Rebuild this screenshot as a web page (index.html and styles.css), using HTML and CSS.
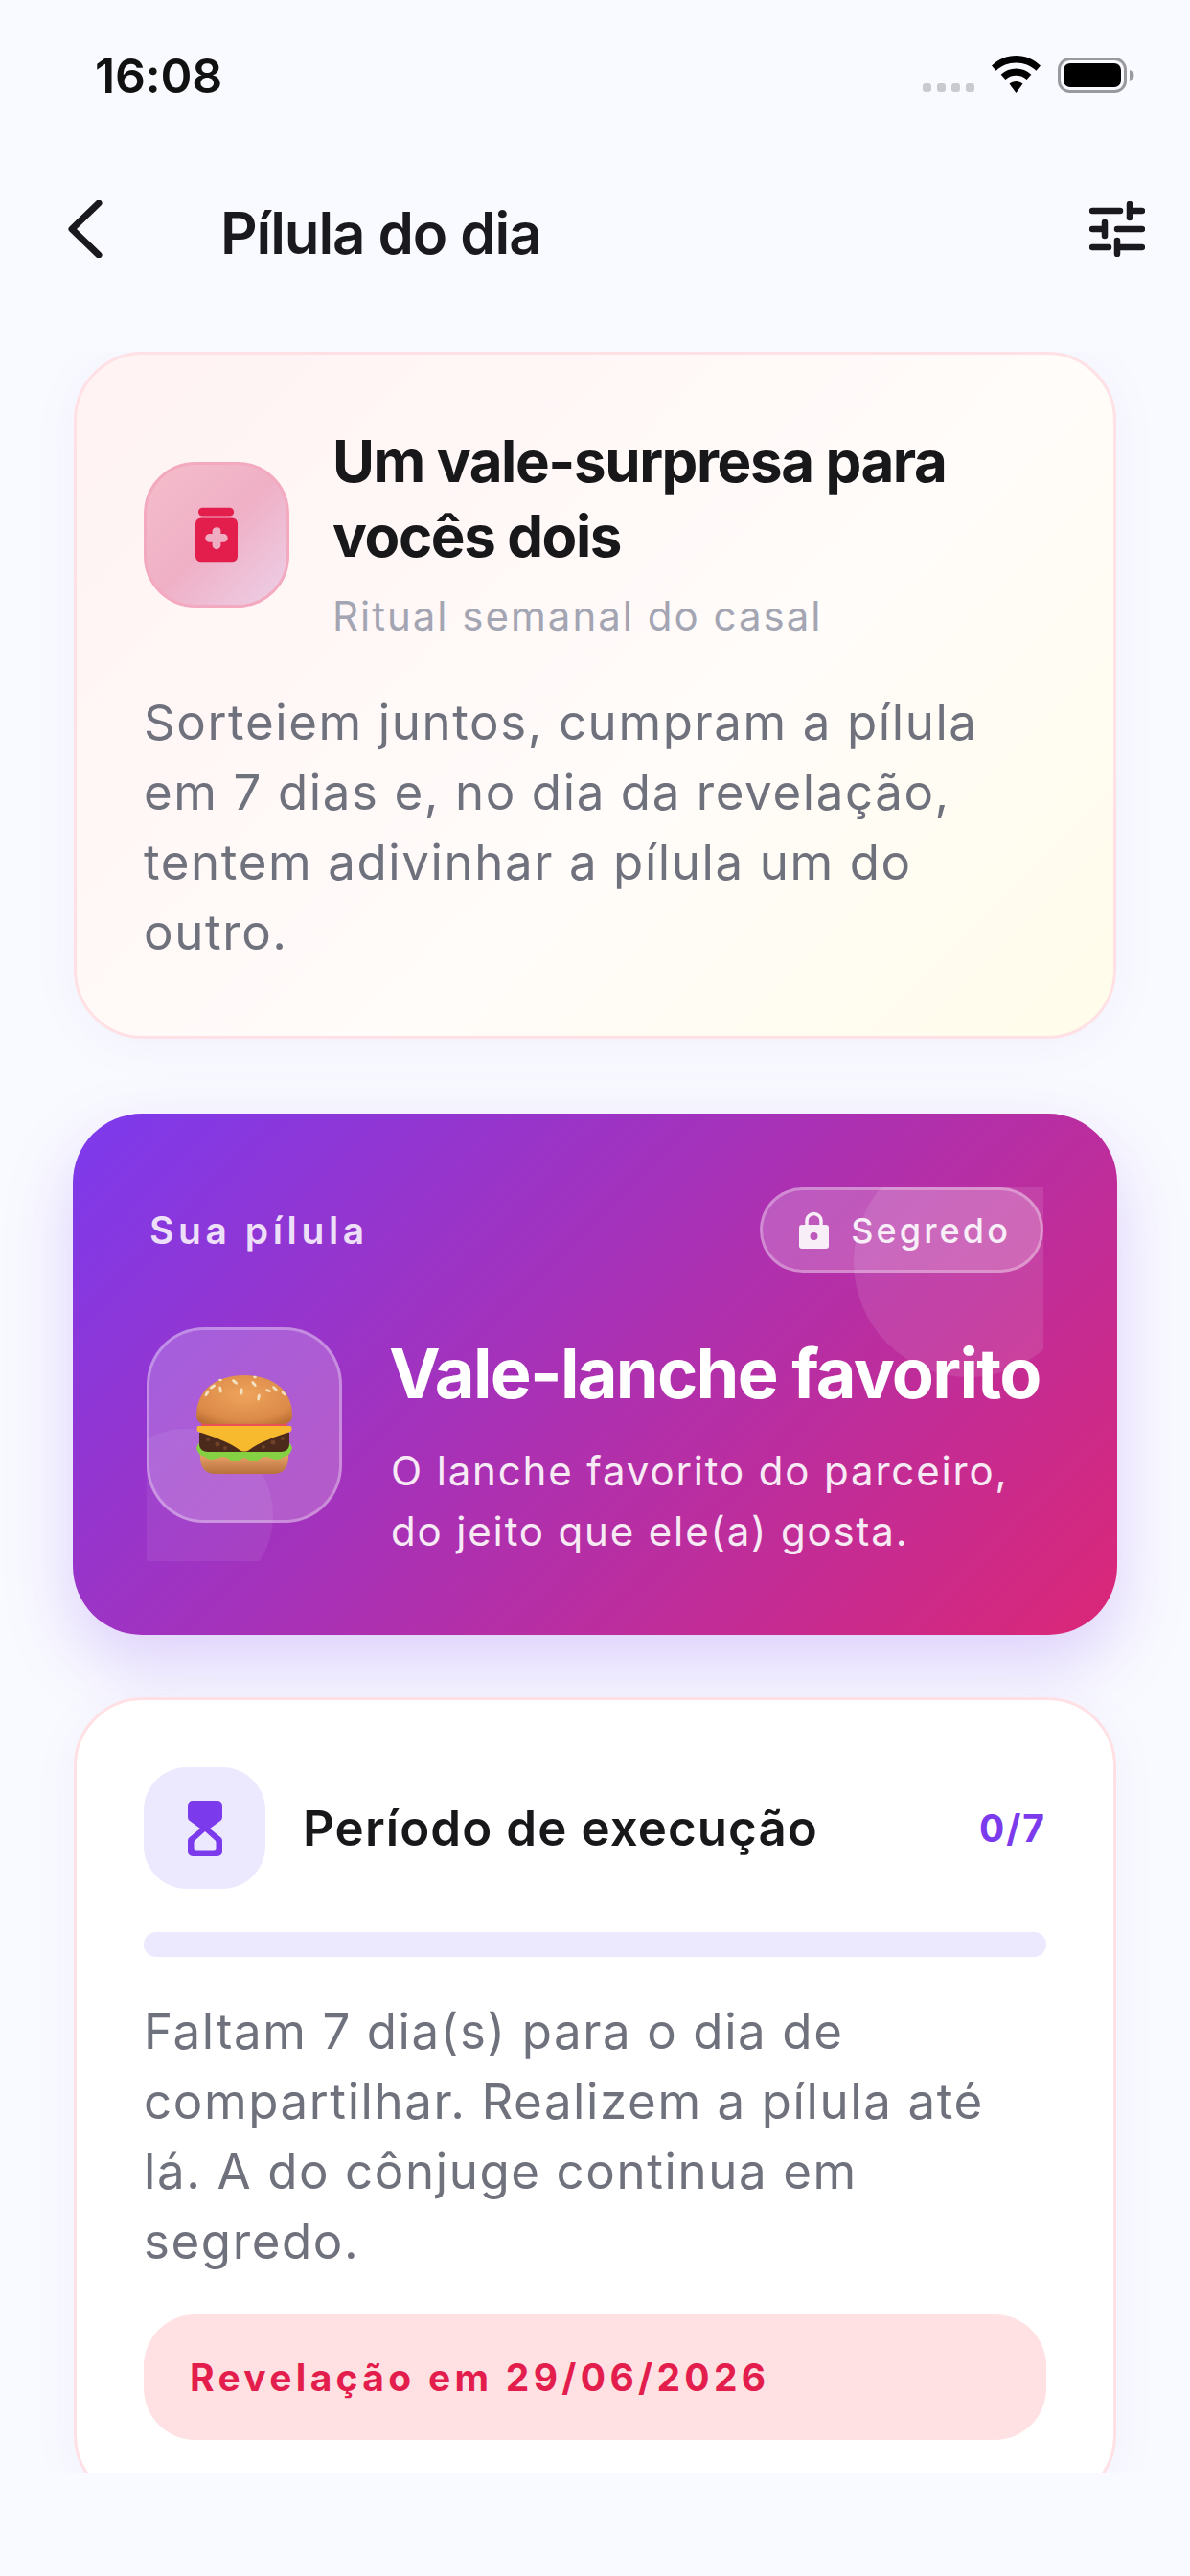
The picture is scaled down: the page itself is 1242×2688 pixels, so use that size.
FILE: index.html
```html
<!DOCTYPE html>
<html lang="pt">
<head>
<meta charset="utf-8">
<title>Pílula do dia</title>
<link rel="stylesheet" href="styles.css">
</head>
<body>
<div class="screen">
  <div class="status-bar">
    <span class="time">16:08</span>
    <div class="status-icons">
      <div class="signal"><i></i><i></i><i></i><i></i></div>
      <svg class="wifi" viewBox="0 0 51 39"><path d="M25.5 0C15.5 0 7 3.8 0 10.6l4.6 5.2C10.400 10.300 17.500 7.500 25.500 7.500S40.600 10.300 46.400 15.800L51 10.600C44 3.800 35.500 0 25.500 0Z"/><path d="M25.500 13.500C19.500 13.500 14.200 15.700 9.700 19.700L14.400 25C17.400 22.300 21.200 20.800 25.500 20.800S33.600 22.300 36.600 25L41.300 19.700C36.800 15.700 31.500 13.500 25.500 13.500Z"/><path d="M25.500 27C22.900 27 20.500 27.900 18.500 29.600L25.500 39L32.500 29.600C30.500 27.900 28.100 27 25.500 27Z"/></svg>
      <svg class="battery" viewBox="0 0 80 37"><rect x="1.500" y="1.500" width="69" height="34" rx="11" fill="none" stroke="#9a9a9e" stroke-width="3"/><rect x="6" y="6" width="60" height="25" rx="7" fill="#000"/><path d="M75 13c3 1 4.500 3 4.500 5.500S78 23 75 24Z" fill="#9a9a9e"/></svg>
    </div>
  </div>

  <header class="top-nav">
    <svg class="back" viewBox="0 0 36 60"><path d="M32 3 4 30l28 27" fill="none" stroke="#1a1a1e" stroke-width="7" stroke-linecap="round" stroke-linejoin="round"/></svg>
    <h1 class="nav-title">Pílula do dia</h1>
    <svg class="tune" viewBox="0 0 58 58"><g fill="none" stroke="#1a1a1e" stroke-width="6.500" stroke-linecap="round"><path d="M3 10h29M42 10h13M42 3v14"/><path d="M3 29h12M16 22v14M29 29h26"/><path d="M3 48h17M29 48h26M29 41v14"/></g></svg>
  </header>

  <main class="content">
    <section class="card intro">
      <div class="intro-head">
        <div class="jar-tile">
          <svg class="jar" viewBox="0 0 46 58"><rect x="3" y="0" width="38" height="9" rx="4.500" fill="#e31e4d"/><rect x="0" y="11" width="45" height="47" rx="6" fill="#e31e4d"/><path d="M23 21a4 4 0 0 1 4 4v3h3a4.500 4.500 0 0 1 0 9h-3v3a4.500 4.500 0 0 1-9 0v-3h-3a4.500 4.500 0 0 1 0-9h3v-3a4.500 4.500 0 0 1 5-4Z" fill="#f0adc2"/></svg>
        </div>
        <div class="intro-titles">
          <h2 class="intro-title">Um vale-surpresa para vocês dois</h2>
          <p class="intro-sub">Ritual semanal do casal</p>
        </div>
      </div>
      <p class="body-text intro-text">Sorteiem juntos, cumpram a pílula em 7 dias e, no dia da revelação, tentem adivinhar a pílula um do outro.</p>
    </section>

    <section class="pill-card">
      <div class="pill-inner">
        <span class="blob blob-a"></span>
        <span class="blob blob-b"></span>
        <div class="pill-top">
          <span class="pill-label">Sua pílula</span>
          <span class="secret">
            <svg class="lock" viewBox="0 0 31 39"><path d="M8 17V10a7.500 7.500 0 0 1 15 0v7" fill="none" stroke="#f8eef8" stroke-width="3.500"/><path fill-rule="evenodd" d="M3 14h25a3 3 0 0 1 3 3v19a3 3 0 0 1-3 3H3a3 3 0 0 1-3-3V17a3 3 0 0 1 3-3Zm12.500 8a4 4 0 1 0 0 8 4 4 0 0 0 0-8Z" fill="#f8eef8"/></svg>
            Segredo
          </span>
        </div>
        <div class="pill-main">
          <div class="emoji-tile">
            <svg class="burger" viewBox="0 0 100 104" role="img" aria-label="hambúrguer">
              <defs>
                <radialGradient id="bun" cx=".5" cy=".4" r=".7"><stop offset="0" stop-color="#eea45c"/><stop offset=".75" stop-color="#dc8a48"/><stop offset="1" stop-color="#bd7034"/></radialGradient>
                <linearGradient id="bottom" x1="0" y1="0" x2="0" y2="1"><stop offset="0" stop-color="#eea86e"/><stop offset="1" stop-color="#b9713c"/></linearGradient>
              </defs>
              <path d="M4 80H96C97 92 94 103 80 103H20C6 103 3 92 4 80Z" fill="url(#bottom)"/>
              <path d="M0 76C1 72 3 70 6 70H94C97 70 99 72 100 76 99 80 97 83 94 84 90 85 88 88 84 88 79 88 77 85 72 85 67 85 65 90 60 90 55 90 53 86 50 86 47 86 45 90 40 90 35 90 33 85 28 85 23 85 21 88 16 88 12 88 10 85 6 84 3 83 1 80 0 76Z" fill="#86d043"/>
              <path d="M3 60H97V72C97 77 93 80 88 80H12C7 80 3 77 3 72Z" fill="#4b2a1c"/>
              <g fill="#6e4128"><circle cx="12" cy="67" r="2"/><circle cx="22" cy="72" r="2.500"/><circle cx="80" cy="70" r="2.500"/><circle cx="90" cy="66" r="2"/><circle cx="70" cy="75" r="2"/><circle cx="30" cy="76" r="2"/></g>
              <rect x="5" y="48" width="90" height="9" rx="4.500" fill="#ea4f55"/>
              <path d="M2 53H98C100 53 100 58 98 59 82 64 66 70 55 78 52 80 48 80 45 78 34 70 18 64 2 59 0 58 0 53 2 53Z" fill="#f7b92e"/>
              <path d="M0 42C0 16 20 0 50 0S100 16 100 42C100 48 96 51 90 51H10C4 51 0 48 0 42Z" fill="url(#bun)"/>
              <g fill="#f3e2c0"><ellipse cx="17" cy="12" rx="3.500" ry="1.500" transform="rotate(-35 17 12)"/><ellipse cx="25" cy="5" rx="1.800" ry="1.200"/><ellipse cx="40" cy="7" rx="3.500" ry="1.500" transform="rotate(40 40 7)"/><ellipse cx="60" cy="9" rx="3.500" ry="1.500" transform="rotate(50 60 9)"/><ellipse cx="61" cy="2" rx="1.800" ry="1.200"/><ellipse cx="82" cy="14" rx="3.500" ry="1.500" transform="rotate(45 82 14)"/><ellipse cx="11" cy="19" rx="3.500" ry="1.500" transform="rotate(-60 11 19)"/><ellipse cx="25" cy="15" rx="3.500" ry="1.500" transform="rotate(80 25 15)"/><ellipse cx="47" cy="17" rx="3.500" ry="1.500" transform="rotate(95 47 17)"/><ellipse cx="65" cy="23" rx="3.500" ry="1.500" transform="rotate(100 65 23)"/><ellipse cx="75" cy="16" rx="3" ry="1.300" transform="rotate(25 75 16)"/><ellipse cx="91" cy="19" rx="3" ry="1.300" transform="rotate(45 91 19)"/></g>
            </svg>
          </div>
          <div class="pill-copy">
            <h2 class="pill-title">Vale-lanche favorito</h2>
            <p class="pill-desc">O lanche favorito do parceiro, do jeito que ele(a) gosta.</p>
          </div>
        </div>
      </div>
    </section>

    <section class="card period">
      <div class="period-head">
        <div class="glass-tile">
          <svg class="glass" viewBox="0 0 36 58"><path fill-rule="evenodd" d="M5 0h26a5 5 0 0 1 5 5v12c0 2-.8 3-2 4L23 29l11 9c1.300 1 2 2.300 2 4v11a5 5 0 0 1-5 5H5a5 5 0 0 1-5-5V42c0-1.700.7-3 2-4l11-9L2 21c-1.200-1-2-2-2-4V5a5 5 0 0 1 5-5Zm13 32-10 9c-1 .8-1.500 1.500-1.500 3v5c0 1.500 .5 2.500 2.500 2.500h18c2 0 2.500-1 2.500-2.500v-5c0-1.500-.5-2.200-1.500-3Z" fill="#7c3aed"/></svg>
        </div>
        <h3 class="period-title">Período de execução</h3>
        <span class="period-count">0/7</span>
      </div>
      <div class="track"></div>
      <p class="body-text period-text">Faltam 7 dia(s) para o dia de compartilhar. Realizem a pílula até lá. A do cônjuge continua em segredo.</p>
      <div class="reveal">Revelação em 29/06/2026</div>
    </section>
  </main>
  <div class="bottom-space"></div>
</div>
</body>
</html>
```

FILE: styles.css
```css
* { box-sizing: border-box; margin: 0; padding: 0; }
html, body { width: 1242px; height: 2688px; overflow: hidden; }
body { background: #f9faff; font-family: Inter, "Noto Sans", sans-serif; color: #1a1a1e; }

.screen { height: 2688px; display: flex; flex-direction: column; }

.status-bar { height: 150px; flex: none; display: flex; justify-content: space-between; padding: 50px 58px 0 99px; }
.time { font-size: 50px; line-height: 58px; font-weight: 600; letter-spacing: -.2px; color: #111; }
.status-icons { display: flex; align-items: flex-start; padding-top: 8px; }
.signal { display: flex; gap: 6px; margin-top: 29px; margin-right: 18px; }
.signal i { width: 9px; height: 9px; border-radius: 3px; background: #c9cacd; }
.wifi { width: 51px; height: 39px; margin-right: 18px; }
.battery { width: 80px; height: 37px; margin-top: 2px; }

.top-nav { height: 217px; flex: none; display: flex; align-items: flex-start; padding: 57px 47px 0 71px; }
.back { width: 36px; height: 60px; flex: none; margin-top: 2px; }
.nav-title { flex: 1; margin-left: 123px; font-size: 60px; line-height: 72px; font-weight: 600; letter-spacing: -1.100px; }
.tune { width: 58px; height: 58px; flex: none; margin-top: 3px; }

.content { flex: 1; min-height: 0; overflow: hidden; padding: 0 76px; display: flex; flex-direction: column; }

.card { flex: none; border: 3px solid #ffe1e5; border-radius: 72px; padding: 0 70px; box-shadow: 0 6px 48px rgba(120, 90, 220, .06); }

.intro { margin: 0 1px; padding-top: 72px; padding-bottom: 72px; background: linear-gradient(135deg, #fff2f3 0%, #fffcfa 58%, #fffcea 100%); }
.intro-head { display: flex; align-items: center; gap: 45px; }
.jar-tile { width: 152px; height: 152px; flex: none; display: flex; align-items: center; justify-content: center; border-radius: 54px; border: 3px solid #f3a9bf; background: linear-gradient(135deg, #f5bdcb 0%, #efb0c6 50%, #ecd0e7 100%); }
.jar { width: 45px; height: 58px; }
.intro-titles { flex: 1; padding-bottom: 3px; }
.intro-title { font-size: 60px; line-height: 78px; font-weight: 700; letter-spacing: -1.400px; color: #18181b; }
.intro-sub { margin-top: 18px; font-size: 42px; line-height: 54px; letter-spacing: 2px; color: #a3a5b3; }

.body-text { font-size: 51px; line-height: 73px; letter-spacing: 1.600px; color: #6f717c; }
.intro-text { margin-top: 44px; }

.pill-card { flex: none; height: 544px; margin-top: 78px; padding: 77px; border-radius: 72px; background: linear-gradient(135deg, #7c3aed 0%, #db2777 100%); box-shadow: 0 30px 72px rgba(124, 58, 237, .22); }
.pill-inner { position: relative; height: 390px; overflow: hidden; }
.blob { position: absolute; border-radius: 50%; background: rgba(255, 255, 255, .1); }
.blob-a { width: 240px; height: 240px; top: -42px; right: -42px; }
.blob-b { width: 180px; height: 180px; bottom: -42px; left: -48px; background: rgba(255, 255, 255, .07); }
.pill-top { position: relative; display: flex; justify-content: space-between; align-items: center; }
.pill-label { margin-left: 3px; font-size: 39px; font-weight: 600; letter-spacing: 4.600px; color: #eddff8; }
.secret { display: flex; align-items: center; gap: 23px; height: 89px; padding: 0 31px 0 38px; border: 3px solid rgba(255, 255, 255, .3); border-radius: 45px; background: rgba(255, 255, 255, .2); font-size: 36px; font-weight: 500; letter-spacing: 3.100px; color: #f8eef8; }
.lock { width: 31px; height: 39px; }
.pill-main { position: relative; display: flex; align-items: flex-start; gap: 49px; margin-top: 57px; }
.emoji-tile { width: 204px; height: 204px; flex: none; display: flex; align-items: center; justify-content: center; border-radius: 60px; border: 3px solid rgba(255, 255, 255, .3); background: rgba(255, 255, 255, .2); }
.burger { width: 100px; height: 104px; }
.pill-copy { flex: 1; min-width: 0; }
.pill-title { font-size: 72px; line-height: 96px; font-weight: 700; letter-spacing: -1.700px; color: #fff; white-space: nowrap; }
.pill-desc { margin-top: 22px; margin-left: 2px; font-size: 42px; line-height: 63px; letter-spacing: 1.850px; color: #f7eaf5; }

.period { margin: 65px 1px 0; padding-top: 70px; padding-bottom: 64px; background: #fff; }
.period-head { display: flex; align-items: center; }
.glass-tile { width: 127px; height: 127px; flex: none; display: flex; align-items: center; justify-content: center; border-radius: 45px; background: #ece8fe; }
.glass { width: 36px; height: 58px; }
.period-title { flex: 1; margin-left: 39px; font-size: 51px; font-weight: 600; letter-spacing: 1.100px; color: #18181b; }
.period-count { font-size: 39px; font-weight: 700; letter-spacing: 2px; color: #7c3aed; }
.track { height: 26px; margin-top: 45px; border-radius: 13px; background: #ece8fe; }
.period-text { margin-top: 41px; }
.reveal { height: 131px; margin-top: 40px; display: flex; align-items: center; padding: 0 48px; border-radius: 54px; background: #ffe1e4; font-size: 39px; font-weight: 700; letter-spacing: 4.300px; color: #e31e4d; }

.bottom-space { height: 108px; flex: none; }
```
